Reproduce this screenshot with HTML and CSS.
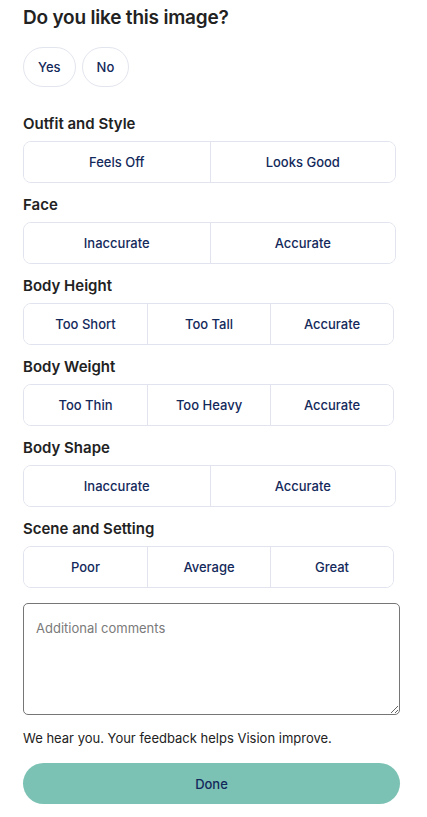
FILE: index.html
```html
<!DOCTYPE html>
<html lang="en">
<head>
<meta charset="utf-8">
<title>Feedback</title>
<link rel="stylesheet" href="styles.css">
</head>
<body>
<main class="page">
  <h1 class="title">Do you like this image?</h1>
  <div class="pills">
    <button class="pill">Yes</button>
    <button class="pill">No</button>
  </div>

  <section class="group">
    <h2 class="label">Outfit and Style</h2>
    <div class="seg seg-2">
      <button class="seg-btn">Feels Off</button>
      <button class="seg-btn">Looks Good</button>
    </div>
  </section>

  <section class="group">
    <h2 class="label">Face</h2>
    <div class="seg seg-2">
      <button class="seg-btn">Inaccurate</button>
      <button class="seg-btn">Accurate</button>
    </div>
  </section>

  <section class="group">
    <h2 class="label">Body Height</h2>
    <div class="seg seg-3">
      <button class="seg-btn">Too Short</button>
      <button class="seg-btn">Too Tall</button>
      <button class="seg-btn">Accurate</button>
    </div>
  </section>

  <section class="group">
    <h2 class="label">Body Weight</h2>
    <div class="seg seg-3">
      <button class="seg-btn">Too Thin</button>
      <button class="seg-btn">Too Heavy</button>
      <button class="seg-btn">Accurate</button>
    </div>
  </section>

  <section class="group">
    <h2 class="label">Body Shape</h2>
    <div class="seg seg-2">
      <button class="seg-btn">Inaccurate</button>
      <button class="seg-btn">Accurate</button>
    </div>
  </section>

  <section class="group">
    <h2 class="label">Scene and Setting</h2>
    <div class="seg seg-3">
      <button class="seg-btn">Poor</button>
      <button class="seg-btn">Average</button>
      <button class="seg-btn">Great</button>
    </div>
  </section>

  <textarea class="comments" placeholder="Additional comments"></textarea>
  <p class="note">We hear you. Your feedback helps Vision improve.</p>
  <button class="done">Done</button>
</main>
</body>
</html>
```

FILE: styles.css
```css
* { box-sizing: border-box; }

html, body {
  margin: 0;
  padding: 0;
  background: #ffffff;
}

body {
  font-family: Inter, "Noto Sans", "Liberation Sans", sans-serif;
  color: #222222;
}

.page {
  width: 377px;
  margin-left: 23px;
  padding-top: 5px;
}

.title {
  margin: 0;
  font-size: 19px;
  line-height: 26px;
  font-weight: 600;
  color: #222222;
  letter-spacing: -0.2px;
}

.pills {
  display: flex;
  gap: 6px;
  margin-top: 16px;
}

.pill {
  height: 40px;
  padding: 0 14px;
  border: 1px solid #e3e5ee;
  border-radius: 20px;
  background: #ffffff;
  font-family: inherit;
  font-size: 13px;
  font-weight: 500;
  color: #13295b;
}

.group {
  margin-top: 27px;
}

.group + .group {
  margin-top: 12px;
}

.label {
  margin: 0;
  font-size: 15px;
  line-height: 20px;
  font-weight: 600;
  color: #222222;
}

.seg {
  display: grid;
  margin-top: 7px;
  height: 42px;
  border: 1px solid #e1e4ee;
  border-radius: 8px;
  overflow: hidden;
}

.seg-2 {
  grid-template-columns: 1fr 1fr;
  width: 373px;
}

.seg-3 {
  grid-template-columns: 1fr 1fr 1fr;
  width: 371px;
}

.seg-btn {
  border: 0;
  background: #ffffff;
  font-family: inherit;
  font-size: 13px;
  font-weight: 500;
  color: #13295b;
  padding: 0;
}

.seg-btn + .seg-btn {
  border-left: 1px solid #e1e4ee;
}

.comments {
  display: block;
  width: 377px;
  height: 112px;
  margin-top: 15px;
  padding: 14px 12px;
  border: 1px solid #767676;
  border-radius: 5px;
  font-family: inherit;
  font-size: 13px;
  line-height: 20px;
  color: #222222;
  resize: vertical;
}

.comments::placeholder {
  color: #7a7a7a;
}

.note {
  margin: 13px 0 0;
  font-size: 13px;
  line-height: 20px;
  color: #222222;
}

.done {
  display: block;
  width: 377px;
  height: 41px;
  margin-top: 15px;
  border: 0;
  border-radius: 21px;
  background: #7cc2b4;
  font-family: inherit;
  font-size: 13px;
  font-weight: 500;
  color: #13295b;
}
```
